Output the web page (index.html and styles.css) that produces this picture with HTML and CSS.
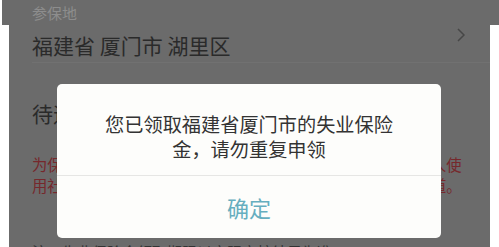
FILE: index.html
```html
<!DOCTYPE html>
<html lang="zh-CN">
<head>
<meta charset="utf-8">
<title>参保地</title>
<link rel="stylesheet" href="styles.css">
</head>
<body>
<div class="screen">
  <div class="field">
    <div class="field-text">
      <div class="label">参保地</div>
      <div class="value">福建省 厦门市 湖里区</div>
    </div>
    <svg class="chevron" width="8" height="14" viewBox="0 0 8 14"><polyline points="1,1 7,7 1,13" fill="none" stroke="#474747" stroke-width="1.5"/></svg>
  </div>
  <div class="divider"></div>
  <div class="section-title">待遇领取信息</div>
  <div class="notice">
    <p>为保障您的合法权益及资金安全，请勿将本人账户出借给他人使</p>
    <p>用社保卡，如有疑问请及时咨询当地人社部门的官方服务渠道。</p>
  </div>
  <div class="footer-text">注：失业保险金领取期限以实际审核结果为准</div>

  <div class="dialog">
    <div class="dialog-body">您已领取福建省厦门市的失业保险<br>金，请勿重复申领</div>
    <div class="dialog-btn">确定</div>
  </div>
</div>
</body>
</html>
```
FILE: styles.css
```css
* { box-sizing: border-box; margin: 0; padding: 0; }
html, body { width: 499px; height: 247px; overflow: hidden; background: #ffffff; }
body { font-family: "Noto Sans CJK SC", "Noto Sans", sans-serif; }

.screen {
  position: relative;
  width: 499px;
  height: 247px;
  overflow: hidden;
  background: #6b6b6b;
  padding: 3px 0 0 32px;
  clip-path: polygon(2px 0, 499px 0, 499px 25px, 490px 25px, 490px 247px, 9px 247px, 9px 25px, 2px 25px);
}

.field { display: flex; align-items: flex-start; justify-content: space-between; padding-right: 34px; }
.label { font-size: 15px; line-height: 20px; color: #8d8d8d; }
.value { margin-top: 8px; font-size: 21px; line-height: 28px; color: #2a2a2a; }
.chevron { margin-top: 25px; }

.divider { margin-top: 3px; height: 1px; background: #717171; margin-right: 9px; }

.section-title { margin-top: 35px; font-size: 21px; line-height: 30px; color: #2a2a2a; }

.notice { margin-top: 26px; width: 440px; }
.notice p { font-size: 15.35px; line-height: 21px; color: #76282c; white-space: nowrap; }

.footer-text { margin-top: 46px; height: 8px; overflow: hidden; font-size: 15px; line-height: 20px; color: #333333; }

.dialog {
  position: absolute;
  left: 57px;
  top: 84px;
  width: 384px;
  height: 154px;
  background: #fdfdfb;
  border-radius: 5px;
  display: flex;
  flex-direction: column;
  overflow: hidden;
}
.dialog-body {
  height: 92px;
  padding-top: 28px;
  text-align: center;
  font-size: 19.2px;
  line-height: 25px;
  color: #333333;
  border-bottom: 1px solid #e6e6e4;
}
.dialog-btn {
  flex: 1;
  display: flex;
  align-items: center;
  justify-content: center;
  font-size: 22px;
  color: #66aebf;
  padding-bottom: 1px;
}
```
